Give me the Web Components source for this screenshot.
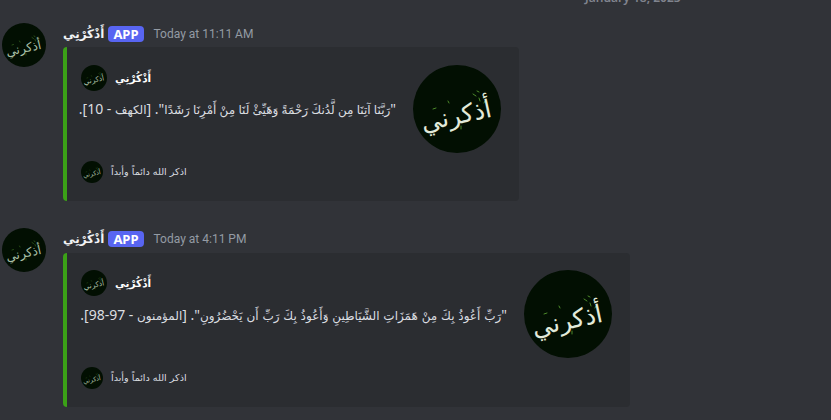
<!DOCTYPE html>
<html lang="ar">
<head>
<meta charset="utf-8">
<title>Messages</title>
<style>
  html, body { margin: 0; height: 100%; }
  body {
    background: #313338;
    overflow: hidden;
    height: 420px;
    font-family: "Noto Sans", "DejaVu Sans", sans-serif;
  }
</style>
</head>
<body>
<date-divider>January 18, 2023</date-divider>

<chat-message name="أَذْكُرْنِي" time="Today at 11:11 AM">
  <bot-embed name="أَذْكُرْنِي" footer="اذكر الله دائماً وأبداً" width="456">"<span style="word-spacing:-.6px">رَبَّنَا آتِنَا مِن لَّدُنكَ رَحْمَةً وَهَيِّئْ لَنَا مِنْ أَمْرِنَا رَشَدًا</span>". [<span>الكهف</span> - 10].</bot-embed>
</chat-message>

<chat-message name="أَذْكُرْنِي" time="Today at 4:11 PM">
  <bot-embed style="--top:17px;--gap:9px" name="أَذْكُرْنِي" footer="اذكر الله دائماً وأبداً" width="567">"<span>رَبِّ أَعُوذُ بِكَ مِنْ هَمَزَاتِ الشَّيَاطِينِ وَأَعُوذُ بِكَ رَبِّ أَن يَحْضُرُونِ</span>". [<span>المؤمنون</span> - 97-98].</bot-embed>
</chat-message>

<script>
class DateDivider extends HTMLElement {
  constructor() {
    super();
    const shadow = this.attachShadow({mode: 'open'});
    shadow.innerHTML = `
      <style>
        :host {
          display: flex;
          align-items: flex-end;
          height: 6px;
          overflow: hidden;
          padding-left: 585px;
          color: #80848e;
          font-size: 12px;
          font-weight: 600;
          line-height: 16px;
        }
        span { white-space: nowrap; }
      </style>
      <span><slot></slot></span>
    `;
  }
}

// the round logo, the lettering in it is a picture in the original
class LogoAvatar extends HTMLElement {
  constructor() {
    super();
    const shadow = this.attachShadow({mode: 'open'});
    shadow.innerHTML = `
      <style>
        :host {
          display: block;
          flex: none;
          width: var(--size, 40px);
          height: var(--size, 40px);
        }
        svg { display: block; width: 100%; height: 100%; }
        text {
          font-family: "DejaVu Sans", sans-serif;
          font-size: 25px;
          fill: var(--ink, #dfe8d6);
        }
      </style>
      <svg viewBox="0 0 88 88" aria-hidden="true">
        <circle cx="44" cy="44" r="44" fill="#020f02"/>
        <g stroke="#4c8a2a" stroke-width="1" stroke-linecap="round">
          <path d="M60 29l3 2M66 33l1 3M64 26l2 1M20 44l3-1M48 61l0 3M35 36l1 2M25 60l0 2M72 36l-1 2"/>
        </g>
        <text x="43" y="59" text-anchor="middle" direction="rtl" transform="rotate(-12 44 50)">أذكرني</text>
      </svg>
    `;
  }
}

class ChatMessage extends HTMLElement {
  constructor() {
    super();
    const shadow = this.attachShadow({mode: 'open'});
    shadow.innerHTML = `
      <style>
        :host {
          display: flex;
          gap: 17px;
          padding: 17px 0 0 2px;
          --size: 44px;
          --ink: #a9bfa6;
        }
        :host(:last-of-type) { padding-top: 27px; }
        .body { margin-top: 1px; }
        header {
          display: flex;
          align-items: center;
          height: 20px;
          margin-bottom: 3px;
        }
        :host(:last-of-type) header { margin-bottom: 4px; }
        .name {
          color: #f2f3f5;
          font: 700 12px/20px "DejaVu Sans", sans-serif;
          white-space: nowrap;
        }
        .badge {
          margin-left: 4px;
          background: #5865f2;
          color: #fff;
          border-radius: 4px;
          height: 16px;
          padding: 0 5px;
          font: 700 13px/16px "Noto Sans", sans-serif;
        }
        time {
          margin-left: 10px;
          color: #949ba4;
          font: 12px/16px Roboto, sans-serif;
          white-space: nowrap;
        }
      </style>
      <logo-avatar></logo-avatar>
      <div class="body">
        <header>
          <span class="name"></span>
          <span class="badge">APP</span>
          <time></time>
        </header>
        <slot></slot>
      </div>
    `;
  }

  connectedCallback() {
    this.shadowRoot.querySelector('.name').textContent = this.getAttribute('name');
    this.shadowRoot.querySelector('time').textContent = this.getAttribute('time');
  }
}

class BotEmbed extends HTMLElement {
  constructor() {
    super();
    const shadow = this.attachShadow({mode: 'open'});
    shadow.innerHTML = `
      <style>
        :host {
          display: flex;
          box-sizing: border-box;
          height: 154px;
          padding: var(--top, 18px) 18px 18px 14px;
          gap: 17px;
          background: #2b2d31;
          border-left: 4px solid #3ba117;
          border-radius: 4px;
          color: #dbdee1;
        }
        .main {
          flex: 1;
          min-width: 0;
          display: flex;
          flex-direction: column;
        }
        .author {
          display: flex;
          align-items: center;
          gap: 8px;
          height: 26px;
          --size: 26px;
        }
        .author span {
          color: #fff;
          font: 700 10.5px/18px "DejaVu Sans", sans-serif;
        }
        .text {
          margin-top: var(--gap, 8px);
          direction: rtl;
          text-align: right;
          font: 14px/20px "Noto Sans", sans-serif;
          white-space: nowrap;
        }
        ::slotted(span) {
          font: 12px/20px "DejaVu Sans", sans-serif;
        }
        .footer {
          margin-top: auto;
          display: flex;
          align-items: center;
          gap: 8px;
          height: 22px;
          --size: 22px;
        }
        .footer span {
          font: 9.6px/16px "DejaVu Sans", sans-serif;
          color: #dbdee1;
        }
        .thumb { --size: 88px; --ink: #e2eada; }
      </style>
      <div class="main">
        <div class="author"><logo-avatar></logo-avatar><span class="who"></span></div>
        <div class="text"><slot></slot></div>
        <div class="footer"><logo-avatar></logo-avatar><span class="foot"></span></div>
      </div>
      <logo-avatar class="thumb"></logo-avatar>
    `;
  }

  connectedCallback() {
    this.style.width = this.getAttribute('width') + 'px';
    this.shadowRoot.querySelector('.who').textContent = this.getAttribute('name');
    this.shadowRoot.querySelector('.foot').textContent = this.getAttribute('footer');
  }
}

customElements.define('date-divider', DateDivider);
customElements.define('logo-avatar', LogoAvatar);
customElements.define('chat-message', ChatMessage);
customElements.define('bot-embed', BotEmbed);
</script>
</body>
</html>
